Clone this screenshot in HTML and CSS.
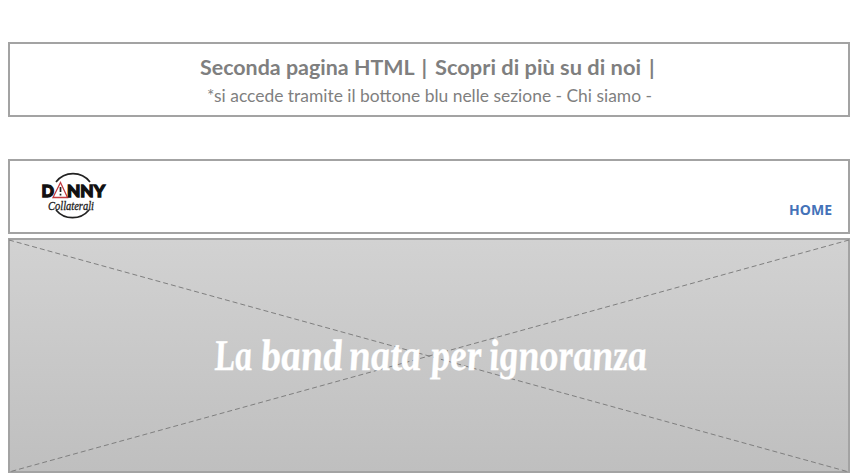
FILE: index.html
```
<!DOCTYPE html>
<html lang="it">
<head>
<meta charset="utf-8">
<title>Danny Collaterali</title>
<link rel="stylesheet" href="styles.css">
</head>
<body>
<main class="page">
  <section class="box intro">
    <h1><svg class="line" viewBox="0 0 838 34"><text y="25.5"><tspan x="190" textLength="214" lengthAdjust="spacingAndGlyphs">Seconda pagina HTML</tspan> <tspan x="411.5">|</tspan> <tspan x="425" textLength="206" lengthAdjust="spacingAndGlyphs">Scopri di più su di noi</tspan> <tspan x="639">|</tspan></text></svg></h1>
    <p><svg class="line" viewBox="0 0 838 26"><text x="197" y="19" textLength="445" lengthAdjust="spacingAndGlyphs">*si accede tramite il bottone blu nelle sezione - Chi siamo -</text></svg></p>
  </section>
  <header class="box bar">
    <svg class="logo" viewBox="0 0 70 50" aria-label="Danny Collaterali">
      <path class="ring" d="M16 12A21.5 21.5 0 0 1 50 12M16 40A21.5 21.5 0 0 0 49 40"/>
      <text class="name" x="1.5" y="26.5" textLength="12.5" lengthAdjust="spacingAndGlyphs">D</text>
      <path class="sign" d="M20.5 12.5L27.5 27.5H13Z"/>
      <path class="mark" d="M20.5 17V22M20.5 23.8V25.5"/>
      <text class="name" x="27" y="26.5" textLength="38" lengthAdjust="spacingAndGlyphs">NNY</text>
      <text class="script" x="8" y="40" textLength="46" lengthAdjust="spacingAndGlyphs">Collaterali</text>
    </svg>
    <a class="home">HOME</a>
  </header>
  <section class="box hero">
    <svg viewBox="0 0 842 235">
      <path class="cross" d="M1 2L841 234M841 2L1 234"/>
      <g class="slogan" transform="translate(0 132) skewX(5)">
        <text x="207" textLength="38" lengthAdjust="spacingAndGlyphs">La</text>
        <text x="254" textLength="82" lengthAdjust="spacingAndGlyphs">band</text>
        <text x="342" textLength="72" lengthAdjust="spacingAndGlyphs">nata</text>
        <text x="424" textLength="51" lengthAdjust="spacingAndGlyphs">per</text>
        <text x="482" textLength="158" lengthAdjust="spacingAndGlyphs">ignoranza</text>
      </g>
    </svg>
  </section>
</main>
</body>
</html>
```
FILE: styles.css
```
* { box-sizing: border-box; }
body { margin: 0; background: #fff; overflow: hidden; font-family: Lato, "Liberation Sans", sans-serif; }
.page { width: 842px; height: 475px; margin-left: 8px; padding-top: 42px; }
.box { border: 2px solid #a3a3a3; }
.intro { height: 75px; padding-top: 5px; margin-bottom: 42px; }
h1, p { margin: 0; }
.line { display: block; width: 838px; fill: #7f7f7f; }
h1 .line { height: 34px; font-size: 21.5px; font-weight: 700; }
p .line { height: 26px; font-size: 17px; font-weight: 400; }
.bar { height: 75px; display: flex; justify-content: space-between; align-items: flex-start; padding: 9px 16px 0 30px; margin-bottom: 4px; }
.logo { width: 70px; height: 50px; }
.ring { fill: none; stroke: #222; stroke-width: 1.7; }
.name { font: 900 17px Lato, sans-serif; fill: #111; stroke: #111; stroke-width: 1.3; }
.sign { fill: #fff; stroke: #c33a40; stroke-width: 1.3; }
.mark { stroke: #222; stroke-width: 1.7; }
.script { font: italic 400 12px "Liberation Serif", serif; fill: #222; stroke: #222; stroke-width: .3; }
.home { margin-top: 31px; font: 700 14px/18px "Open Sans", sans-serif; color: #4472b8; }
.hero { height: 235px; background: linear-gradient(#d2d2d2, #bfbfbf); }
.hero svg { display: block; width: 842px; height: 235px; margin: -2px; }
.cross { fill: none; stroke: #7f7f7f; stroke-width: 1; stroke-dasharray: 5 3; }
.slogan { font: italic 700 44px "Liberation Serif", serif; fill: #fff; stroke: #fff; stroke-width: .3; }
```
